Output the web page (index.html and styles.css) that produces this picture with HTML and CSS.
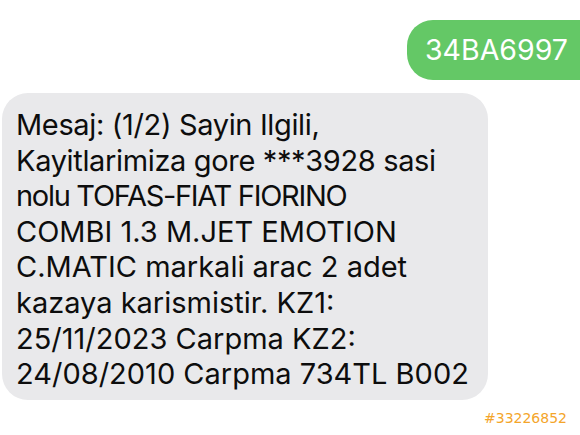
FILE: index.html
```html
<!DOCTYPE html>
<html>
<head>
<meta charset="utf-8">
<link rel="stylesheet" href="styles.css">
</head>
<body>
<div class="chat">
  <div class="row sent-row">
    <div class="bubble sent">34BA6997</div>
  </div>
  <div class="row recv-row">
    <div class="bubble recv"><span class="snug">Mesaj: (1/2) Sayin Ilgili,</span><br><span class="snug">Kayitlarimiza gore ***3928 sasi</span><br><span class="caps">nolu TOFAS-FIAT FIORINO</span><br>COMBI 1.3 M.JET EMOTION<br>C.MATIC markali arac 2 adet<br>kazaya karismistir. KZ1:<br>25/11/2023 Carpma KZ2:<br>24/08/2010 Carpma 734TL B002</div>
  </div>
  <div class="tag">#33226852</div>
</div>
</body>
</html>
```

FILE: styles.css
```css
html, body {
  margin: 0;
  padding: 0;
  background: #ffffff;
  overflow: hidden;
  width: 580px;
  height: 435px;
}
.chat {
  display: flex;
  flex-direction: column;
  padding-top: 20px;
  font-family: Inter, "Liberation Sans", Arial, sans-serif;
}
.row {
  display: flex;
}
.sent-row {
  justify-content: flex-start;
  padding-left: 407px;
  overflow: hidden;
}
.bubble {
  border-radius: 26px;
}
.sent {
  flex: none;
  background: #64c866;
  color: #ffffff;
  font-size: 28.5px;
  line-height: 30px;
  padding: 15px 40px 15px 18px;
}
.recv-row {
  margin-top: 13px;
  padding-left: 2px;
}
.recv {
  box-sizing: border-box;
  background: #e9e9eb;
  color: #0d0d0d;
  font-size: 29px;
  line-height: 35.6px;
  padding: 14px 0 8px 14px;
  width: 486px;
  white-space: nowrap;
}
.snug {
  letter-spacing: -0.35px;
}
.caps {
  letter-spacing: -1.3px;
}
.tag {
  align-self: flex-end;
  margin-right: 13px;
  margin-top: 10px;
  color: #f4a52a;
  font-family: "DejaVu Sans", sans-serif;
  font-size: 14px;
  line-height: 17px;
}
```
